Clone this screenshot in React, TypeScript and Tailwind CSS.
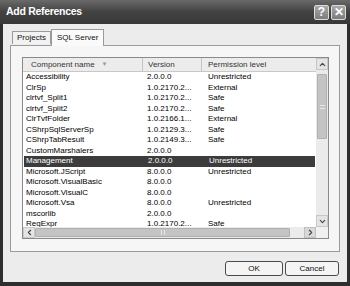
import { ChevronDown, ChevronLeft, ChevronRight, ChevronUp } from 'lucide-react'

interface RefRow {
	name: string
	version: string
	permission: string
	selected?: boolean
}

const rows: RefRow[] = [
	{ name: 'Accessibility', version: '2.0.0.0', permission: 'Unrestricted' },
	{ name: 'ClrSp', version: '1.0.2170.2...', permission: 'External' },
	{ name: 'clrtvf_Split1', version: '1.0.2170.2...', permission: 'Safe' },
	{ name: 'clrtvf_Split2', version: '1.0.2170.2...', permission: 'Safe' },
	{ name: 'ClrTvfFolder', version: '1.0.2166.1...', permission: 'External' },
	{ name: 'CShrpSqlServerSp', version: '1.0.2129.3...', permission: 'Safe' },
	{ name: 'CShrpTabResult', version: '1.0.2149.3...', permission: 'Safe' },
	{ name: 'CustomMarshalers', version: '2.0.0.0', permission: '' },
	{ name: 'Management', version: '2.0.0.0', permission: 'Unrestricted', selected: true },
	{ name: 'Microsoft.JScript', version: '8.0.0.0', permission: 'Unrestricted' },
	{ name: 'Microsoft.VisualBasic', version: '8.0.0.0', permission: '' },
	{ name: 'Microsoft.VisualC', version: '8.0.0.0', permission: '' },
	{ name: 'Microsoft.Vsa', version: '8.0.0.0', permission: 'Unrestricted' },
	{ name: 'mscorlib', version: '2.0.0.0', permission: '' },
	{ name: 'RegExpr', version: '1.0.2170.2...', permission: 'Safe' },
]

const font = { fontFamily: '"Liberation Sans", Arial, sans-serif' }

const App = () => {
	return (
		<div className="w-[350px] h-[286px] bg-[#2e2e2e] flex flex-col overflow-hidden" style={font}>
			{/* Title bar */}
			<div className="h-[24px] shrink-0 flex items-center justify-between pl-[6px] pr-[4px] bg-gradient-to-b from-[#6a6a6a] via-[#424242] to-[#383838]">
				<span className="text-white font-bold text-[10.5px] tracking-[-0.3px]">Add References</span>
				<div className="flex gap-[2px]">
					<div className="w-[15px] h-[15px] rounded-[2px] border border-[#dcdcdc] bg-gradient-to-b from-[#a8a8a8] to-[#7c7c7c] flex items-center justify-center text-white font-bold text-[12px] leading-none">
						?
					</div>
					<div className="w-[15px] h-[15px] rounded-[2px] border border-[#dcdcdc] bg-gradient-to-b from-[#a8a8a8] to-[#7c7c7c] flex items-center justify-center text-white font-bold text-[12px] leading-none">
						✕
					</div>
				</div>
			</div>

			{/* Window body */}
			<div className="flex-1 mx-[3px] mb-[4px] bg-[#ececec] flex flex-col">
				{/* Tabs */}
				<div className="h-[21px] shrink-0 flex items-end pl-[9px] text-[8px] text-[#111]">
					<div className="h-[13px] mb-px px-[4px] border border-b-0 border-[#9a9a9a] bg-[#f2f2f2] flex items-center">
						Projects
					</div>
					<div className="h-[17px] -mb-px px-[5px] border border-b-0 border-[#9a9a9a] bg-[#fafafa] flex items-start pt-[2px] relative z-10">
						SQL Server
					</div>
				</div>

				{/* Tab panel */}
				<div className="mx-[7px] h-[207px] border border-[#9a9a9a] bg-[#f6f6f6] pl-[11px] pr-[10px] pt-[11px] pb-[12px]">
					<div className="h-full border border-[#8a8a8a] bg-white flex flex-col text-[8px] text-black">
						<div className="flex-1 flex min-h-0">
							{/* List content */}
							<div className="flex-1 overflow-hidden flex flex-col">
								<div className="h-[14px] shrink-0 flex items-center bg-[#ececec] border-b border-[#c8c8c8] text-[#333]">
									<div className="w-[120px] h-full flex items-center pl-[8px] border-r border-[#c4c4c4]">
										Component name
										<span className="ml-[7px] text-[#9a9a9a] text-[6px]">▼</span>
									</div>
									<div className="w-[59px] h-full flex items-center pl-[5px] border-r border-[#c4c4c4]">Version</div>
									<div className="flex-1 h-full flex items-center pl-[6px]">Permission level</div>
								</div>
								{rows.map((r) => (
									<div
										key={r.name}
										className={`h-[10.5px] shrink-0 flex items-center whitespace-nowrap ${r.selected ? 'bg-[#3c3c3c] text-white mx-px' : ''}`}
									>
										<div className={`w-[120px] ${r.selected ? 'pl-[2px]' : 'pl-[3px]'}`}>{r.name}</div>
										<div className="w-[59px] pl-[4px]">{r.version}</div>
										<div className="flex-1 pl-[6px]">{r.permission}</div>
									</div>
								))}
							</div>
							{/* Vertical scrollbar */}
							<div className="w-[12px] shrink-0 bg-[#ebebeb] flex flex-col">
								<div className="h-[12px] bg-[#e4e4e4] border border-[#c8c8c8] flex items-center justify-center">
									<ChevronUp size={9} strokeWidth={3} className="text-[#444]" />
								</div>
								<div className="h-[4px]" />
								<div className="h-[65px] mx-px bg-[#c4c4c4] border border-[#b0b0b0] rounded-[1px] flex items-center justify-center">
									<div className="w-[5px] h-[4px] border-y border-[#e8e8e8]" />
								</div>
								<div className="flex-1" />
								<div className="h-[12px] bg-[#e4e4e4] border border-[#c8c8c8] flex items-center justify-center">
									<ChevronDown size={9} strokeWidth={3} className="text-[#444]" />
								</div>
							</div>
						</div>
						{/* Horizontal scrollbar */}
						<div className="h-[11px] shrink-0 flex bg-[#ebebeb]">
							<div className="w-[12px] bg-[#e4e4e4] border border-[#c8c8c8] flex items-center justify-center">
								<ChevronLeft size={9} strokeWidth={3} className="text-[#444]" />
							</div>
							<div className="w-[255px] my-px bg-[#c4c4c4] border border-[#b0b0b0] rounded-[1px] flex items-center justify-center">
								<div className="w-[4px] h-[5px] border-x border-[#e8e8e8]" />
							</div>
							<div className="flex-1" />
							<div className="w-[12px] bg-[#d8d8d8] border border-[#c0c0c0] flex items-center justify-center">
								<ChevronRight size={9} strokeWidth={3} className="text-[#444]" />
							</div>
							<div className="w-[12px] bg-[#f0f0f0]" />
						</div>
					</div>
				</div>

				{/* Buttons */}
				<div className="mt-[9px] mr-[8px] flex justify-end gap-[2px] text-[8px] text-[#111]">
					<button className="w-[58px] h-[15px] rounded-[3px] border border-[#4a4a4a] bg-[#f4f4f4]">OK</button>
					<button className="w-[54px] h-[15px] rounded-[3px] border border-[#4a4a4a] bg-[#f4f4f4]">Cancel</button>
				</div>
			</div>
		</div>
	)
}

export default App
